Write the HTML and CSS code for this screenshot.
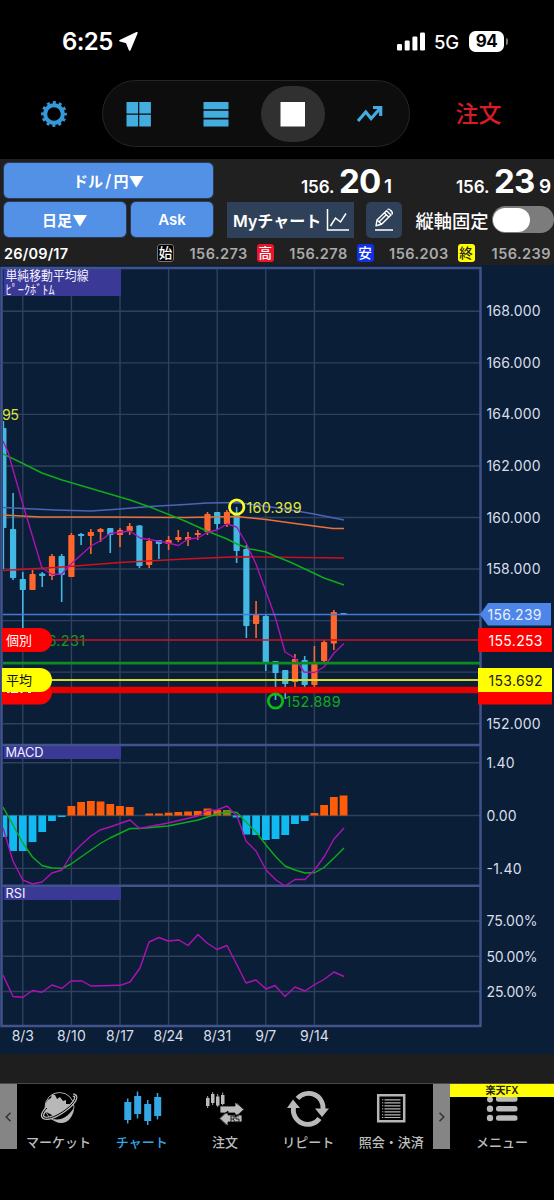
FILE: index.html
```html
<!DOCTYPE html>
<html lang="ja">
<head>
<meta charset="utf-8">
<title>チャート</title>
<link rel="stylesheet" href="styles.css">
</head>
<body>
<header class="status">
  <span class="clock">6:25</span>
  <svg class="loc" width="21" height="21" viewBox="0 0 21 21"><path d="M18.800 1.800 2 9.700l6.700 1.700 3 7.500z" fill="#fff" stroke="#fff" stroke-width="1.800" stroke-linejoin="round"/></svg>
  <svg class="signal" width="29" height="19" viewBox="0 0 29 19" fill="#fff"><rect x="0" y="12" width="5" height="6.5" rx="1.3"/><rect x="7.7" y="8.5" width="5" height="10" rx="1.3"/><rect x="15.4" y="4.5" width="5" height="14" rx="1.3"/><rect x="23" y=".5" width="5" height="18" rx="1.3"/></svg>
  <span class="net">5G</span>
  <span class="battery">94</span><i class="tip"></i>
</header>

<nav class="modes">
  <svg class="gear" width="28" height="28" viewBox="-14 -14 28 28"><circle r="8.800" fill="none" stroke="#3598d8" stroke-width="4"/><circle r="11.500" fill="none" stroke="#3598d8" stroke-width="2.800" stroke-dasharray="3 3.020" stroke-dashoffset="1.500"/></svg>
  <div class="pill">
    <div class="mode"><svg width="26" height="26" fill="#43addf"><path d="M.5 1h11.600v11.500H.5zM13.300 1h11.600v11.500H13.300zM.5 13.800h11.600v11.700H.5zM13.300 13.800h11.600v11.700H13.300z"/></svg></div>
    <div class="mode"><svg width="26" height="26" fill="#43addf"><path d="M.5 1h25v7.200h-25zM.5 9.800h25v7h-25zM.5 18.400h25v7.100h-25z"/></svg></div>
    <div class="mode on"><svg width="26" height="26" fill="#fff"><path d="M.5 1h24.500v24.500H.5z"/></svg></div>
    <div class="mode"><svg width="28" height="20" fill="none" stroke="#43addf" stroke-width="3.200"><path d="m2 17 7.800-9 5.300 6.500L24 4.500"/><path d="M17 3.500h7.700V12"/></svg></div>
  </div>
  <span class="order">注文</span>
</nav>

<section class="panel">
  <div class="row pair">
    <div class="btn wide">ドル<span class="slash">/</span>円▼</div>
    <div class="rate bid"><small>156.</small><b>20</b><em>1</em></div>
    <div class="rate ask"><small>156.</small><b>23</b><em>9</em></div>
  </div>
  <div class="row tools">
    <div class="btn term">日足▼</div>
    <div class="btn side">Ask</div>
    <div class="my"><span>Myチャート</span><svg width="24" height="24" fill="none" stroke="#fff" stroke-width="1.500"><path d="M1.500 1v21H23M4.500 18l5-8 5 4 5.500-8.500"/></svg></div>
    <div class="pen"><svg width="22" height="25" fill="none" stroke="#fff" stroke-width="1.400" stroke-linejoin="round"><path d="M2 23h18M3 18.800l1-5.800L13.500 3.800l4.500 4.200-9.500 9.300zM4 13l4.500 4.300M11.500 6l4.500 4.200M14.500 2.500c1.500-1.300 6 2.700 4.500 4.800M6 15l7.500-7.500"/></svg></div>
    <span class="axis">縦軸固定</span>
    <div class="toggle"><i></i></div>
  </div>
  <div class="row ohlc">
    <span class="date">26/09/17</span>
    <i class="tag open">始</i><span class="val">156.273</span>
    <i class="tag high">高</i><span class="val">156.278</span>
    <i class="tag low">安</i><span class="val">156.203</span>
    <i class="tag close">終</i><span class="val">156.239</span>
  </div>
</section>

<svg class="chart" width="554" height="789" viewBox="0 265 554 789">
  <defs><clipPath id="plot"><rect x="3" y="268" width="478" height="760"/></clipPath></defs>
  <rect y="265" width="554" height="789" fill="#0b1e38"/>
  <g id="grid" stroke="#2e415d" stroke-width="1.400"></g>
  <g id="labels">
    <path d="M3 268h118v28H3zM3 745h118v14H3zM3 886h118v14H3z" fill="#3a3996"/>
    <path d="M3 269v26M3 746v13M3 887v13" stroke="#1d1f88" stroke-width="2"/>
  </g>
  <path d="M1.500 268H480.500V1026H1.500ZM1.500 745H480.500M1.500 885.800H480.500" fill="none" stroke="#40538a" stroke-width="2.500"/>
  <g class="name">
    <text x="5.500" y="279.500" textLength="83" lengthAdjust="spacingAndGlyphs">単純移動平均線</text>
    <text x="5.500" y="293.500" textLength="49" lengthAdjust="spacingAndGlyphs">ﾋﾟｰｸﾎﾞﾄﾑ</text>
    <text x="5.500" y="757" textLength="38">MACD</text>
    <text x="5.500" y="898" textLength="20">RSI</text>
  </g>
  <g id="scale" class="scale"></g>
  <g clip-path="url(#plot)">
    <g id="candles"></g>
    <g id="bars"></g>
    <g id="curves" fill="none" stroke-width="1.400" stroke-linejoin="round"></g>
    <text class="peak" x="2" y="420" textLength="17" fill="#d7e23a">95</text>
    <text class="peak" x="32" y="646" textLength="53" fill="#1b9a20">156.231</text>
    <path d="M3 614.500h478" stroke="#4679d3" stroke-width="1.500"/>
    <path d="M3 640h478" stroke="#d01020" stroke-width="1.500"/>
    <path d="M3 663.200h477" stroke="#0d8c22" stroke-width="2.700"/>
    <path d="M3 680h478" stroke="#d8da30" stroke-width="1.900"/>
    <path d="M3 690h478" stroke="#e60000" stroke-width="6.500"/>
    <circle cx="236.700" cy="507" r="7.200" fill="none" stroke="#ffff20" stroke-width="2.700"/>
    <circle cx="275.500" cy="701" r="7.200" fill="none" stroke="#0bbd16" stroke-width="2.700"/>
    <text class="peak" x="246.500" y="512.500" textLength="55" fill="#e2e83c">160.399</text>
    <text class="peak" x="285.500" y="706.500" textLength="55" fill="#13aa1c">152.889</text>
  </g>
  <g class="flag">
    <path d="M2 680.500h38a12 12 0 0 1 0 24H2zM2 628h38a12 12 0 0 1 0 24H2z" fill="#f00"/>
    <path d="M7 692.500h2.500M11 692.500h7M20.500 692.500h2M28 692.500h3" stroke="#fff" stroke-width="1"/>
    <text x="6" y="645" textLength="26" fill="#fff">個別</text>
    <path d="M2 668h38a12 12 0 0 1 0 24H2z" fill="#ff0"/>
    <text x="6" y="685" textLength="26" fill="#111">平均</text>
  </g>
  <path d="m480 614.500 8-11.500h63v22.500h-63z" fill="#4d86e8"/>
  <path d="M478 628h74v24h-74zM478 680.500h74v24h-74z" fill="#f00"/>
  <g class="quote">
    <path d="M478 668h74v24h-74z" fill="#ff0"/>
    <text x="487.500" y="620" textLength="54" fill="#e7f0ff">156.239</text>
    <text x="488.500" y="645.500" textLength="54" fill="#fff">155.253</text>
    <text x="488.500" y="685.500" textLength="54" fill="#222">153.692</text>
  </g>
</svg>

<div class="band"></div>

<nav class="tabs">
  <div class="arrow"><svg width="7" height="10" fill="none" stroke="#333" stroke-width="1.500"><path d="M5.500.8 1.200 5l4.300 4.200"/></svg></div>
  <div class="tab">
    <svg width="40" height="40" viewBox="38 1088 40 40"><circle cx="58.500" cy="1107" r="14.500" fill="none" stroke="#aaa" stroke-width="1"/><path d="M45 1112c-2-7 0-12 5-14l1-4 3 1 2 4 3-2 3 4 3-1v4l4 0-6 7-10 5z" fill="#b8b8b8"/><path d="M52 1119c9 2 15-3 20-10 1 6-4 14-12 14-4 0-7-2-8-4" fill="#b8b8b8"/><path d="M46 1108c-10 10-2 14 12 6 14-8 21-18 14-19" fill="none" stroke="#bbb" stroke-width="3.400"/><path d="M46 1108c-10 10-2 14 12 6 14-8 21-18 14-19" fill="none" stroke="#000" stroke-width="1"/></svg>
    <span>マーケット</span>
  </div>
  <div class="tab on">
    <svg width="40" height="40" viewBox="121 1088 40 40" fill="#35a7e5" stroke="#35a7e5"><path d="M126.700 1098.500v25M136.500 1091.500v27M146.700 1100v25M156.500 1093v26.500" stroke-width="1.500"/><path d="M123.300 1102h7v18h-7zM133.200 1096h7v18h-7zM143.200 1104h7v17h-7zM153.200 1097h7v19h-7z" stroke="none"/></svg>
    <span>チャート</span>
  </div>
  <div class="tab">
    <svg width="44" height="40" viewBox="203 1088 44 40" fill="#bbb"><path d="M207.700 1096v12M212.700 1092v13M217.700 1094v13M222.700 1092.500v13" stroke="#aaa" stroke-width="1"/><path d="M206 1098h3.500v8H206zM211 1094h3.500v9H211zM216 1096.500h3.500v9H216zM221 1095h3.500v9H221z"/><path d="M220 1106h15v-4l9.500 7.500-9.500 7.500v-4h-15zM242 1115h-14v-4l-9 7.500 9 7.500v-4h14z" stroke="#000" stroke-width=".8"/><path d="m237 1103 6.500 6.500-6.500 6.500M226 1112l-6 6.500 6 6.500" fill="none" stroke="#333"/><path d="M231 1116v6m0-6h3v3h-3m2 0 2 3m4-6h-3v3h3v3h-3" fill="none" stroke="#222"/></svg>
    <span>注文</span>
  </div>
  <div class="tab">
    <svg width="44" height="40" viewBox="286 1088 44 40" fill="none" stroke="#b9b9b9" stroke-width="4.800"><path d="M297.500 1098.500a14.500 14.500 0 0 1 25.500 11M319.500 1118.500a14.500 14.500 0 0 1-26-11"/><path d="m315 1108.500 14 0-7 8.500zM287 1108l6-8.500 7 8.500z" fill="#b9b9b9" stroke="none"/></svg>
    <span>リピート</span>
  </div>
  <div class="tab">
    <svg width="40" height="40" viewBox="371 1088 40 40" fill="none" stroke="#b5b5b5"><path d="M378.200 1095.200h26v26h-26z" stroke-width="2.500"/><path d="M384.500 1099.800h16M384.500 1102.800h16M384.500 1105.800h16M384.500 1108.800h16M384.500 1111.800h16M384.500 1114.800h16M384.500 1117.500h16" stroke-width="1.200"/><path d="M382 1099.800h1.300M382 1102.800h1.300M382 1105.800h1.300M382 1108.800h1.300M382 1111.800h1.300M382 1114.800h1.300M382 1117.500h1.300"/></svg>
    <span>照会・決済</span>
  </div>
  <div class="arrow"><svg width="7" height="10" fill="none" stroke="#333" stroke-width="1.500"><path d="M1.500.8 5.800 5 1.500 9.200"/></svg></div>
  <div class="menu">
    <div class="brand">楽天FX</div>
    <svg width="34" height="28" viewBox="485 1097 34 28" fill="#b9b9b9"><circle cx="490" cy="1099.500" r="3"/><circle cx="490" cy="1108.700" r="3.200"/><circle cx="490" cy="1118" r="3.200"/><rect x="496" y="1095.500" width="21.500" height="6.200" rx="2.500"/><rect x="496" y="1106" width="21.500" height="5.500" rx="2.500"/><rect x="496" y="1115.300" width="21.500" height="5.500" rx="2.500"/></svg>
    <span>メニュー</span>
  </div>
</nav>
<script src="chart.js"></script>
</body>
</html>
```

FILE: styles.css
```css
* { box-sizing: border-box; }
body { margin: 0; width: 554px; height: 1200px; overflow: hidden; background: #000; color: #fff; font-family: Inter, "Noto Sans CJK JP", sans-serif; }
svg { display: block; flex: none; }
i, em { font-style: normal; }
.status { height: 80px; padding: 3px 46px 0 62px; display: flex; align-items: center; }
.clock { font-size: 24px; font-weight: 600; letter-spacing: -.6px; width: 56px; }
.signal { margin-left: 258px; }
.net { font-size: 18.500px; font-weight: 500; width: 35px; margin-left: 8px; white-space: nowrap; letter-spacing: -.3px; }
.battery { width: 35px; height: 21px; border-radius: 6.500px; background: #fff; color: #000; font-size: 17px; line-height: 21px; font-weight: 700; letter-spacing: -.6px; text-align: center; flex: none; }
.tip { width: 2px; height: 7px; margin-left: 1.500px; border-radius: 0 2px 2px 0; background: #777; }

.modes { height: 79px; padding-left: 39.500px; display: flex; align-items: flex-start; }
.gear { margin-top: 20px; }
.pill { width: 308px; height: 67px; margin-left: 34px; padding: 0 4.500px; border: 1px solid #252525; border-radius: 34px; background: #0d0d0d; display: flex; align-items: center; }
.mode { width: 64px; height: 56px; margin-right: 13px; display: flex; align-items: center; justify-content: center; border-radius: 28px; flex: none; }
.mode.on { background: #303030; }
.mode:last-child { margin-right: 0; }
.order { margin: 17px 0 0 46px; font-size: 23px; line-height: 34px; font-weight: 500; color: #d51c28; }

.panel { height: 106px; background: #202020; padding: 4px 0 0 4px; }
.row { display: flex; align-items: center; }
.btn { height: 35px; border-radius: 5px; background: #5391e6; box-shadow: 0 0 0 1px #293c59; display: flex; align-items: center; justify-content: center; font-size: 15px; font-weight: 600; flex: none; }
.wide { width: 209px; }
.slash { margin: 0 2px; font-size: 17px; font-weight: 500; }
.pair { height: 35px; }
.rate { display: flex; align-items: baseline; font-weight: 600; line-height: 36px; padding-top: 7px; flex: none; }
.rate small { font-size: 17px; width: 38px; letter-spacing: -.1px; }
.rate b { font-size: 33px; font-weight: 700; width: 45px; letter-spacing: -.8px; }
.rate em { font-size: 19px; width: 12px; }
.bid { margin-left: 88px; }
.ask { margin-left: 60px; }
.tools { margin-top: 3.500px; height: 36px; }
.term { width: 121.500px; }
.side { width: 82px; margin-left: 5.500px; }
.my { width: 127px; height: 36px; margin-left: 14px; padding-left: 6px; background: #2f4059; display: flex; align-items: center; font-size: 16px; font-weight: 600; white-space: nowrap; flex: none; }
.my span { width: 93px; }
.pen { width: 36px; height: 36px; margin-left: 12px; border-radius: 5px; background: #2f4059; display: flex; align-items: center; justify-content: center; flex: none; }
.axis { width: 76px; margin-left: 13.500px; font-size: 18.300px; font-weight: 500; white-space: nowrap; flex: none; }
.toggle { width: 62px; height: 27px; border-radius: 14px; background: #7c7c7c; padding: 1.500px; flex: none; }
.toggle i { display: block; width: 37px; height: 24px; border-radius: 12px; background: #fff; }
.ohlc { height: 30px; padding-top: 1px; font-size: 14.500px; font-weight: 600; }
.date { width: 153px; letter-spacing: .2px; flex: none; }
.tag { width: 17px; height: 18px; border-radius: 3px; font-size: 13.500px; font-weight: 500; line-height: 18px; text-align: center; flex: none; }
.open { background: #000; outline: 1px solid #777; outline-offset: -1px; }
.high { background: #e9152c; }
.low { background: #1030e8; }
.close { background: #ff0; color: #222; }
.val { width: 82.800px; padding-left: 15.500px; color: #aaa; letter-spacing: .45px; flex: none; }
.low + .val { width: 84px; }
.close + .val { padding-left: 17px; }

.chart text { font-family: Inter, "Noto Sans CJK JP", sans-serif; }
.name text { font-size: 12.800px; fill: #f0f0ff; }
.scale text { font-size: 14px; fill: #d8deea; }
.peak { font-size: 14.300px; }
.flag text { font-size: 13px; }
.quote text { font-size: 14px; }

.band { height: 29px; background: #1e1e1e; }
.tabs { height: 117px; border-top: 1px solid #484848; display: flex; align-items: flex-start; }
.arrow { width: 17px; height: 65px; background: #858585; display: flex; align-items: center; justify-content: center; flex: none; }
.tab { width: 83.200px; padding-top: 4px; display: flex; flex-direction: column; align-items: center; color: #bdbdbd; }
.tab span, .menu span { font-size: 13px; line-height: 20px; font-weight: 500; white-space: nowrap; margin-top: 4px; }
.tab.on { color: #35a7e5; }
.menu { width: 104px; display: flex; flex-direction: column; align-items: center; color: #bdbdbd; }
.brand { width: 104px; height: 13px; background: #ff0; color: #222; font-size: 10px; line-height: 13px; font-weight: 600; text-align: center; }
.menu span { margin-top: 7px; }
```

FILE: chart.js
```js
const NS = 'http://www.w3.org/2000/svg';
const step = 9.72, first = 3.36;
const px = i => first + i * step;
const add = (id, tag, attrs, text) => {
  const el = document.createElementNS(NS, tag);
  for (const k in attrs) el.setAttribute(k, attrs[k]);
  if (text) el.textContent = text;
  document.getElementById(id).appendChild(el);
};

// Grid and axis labels; rows covered by price tags carry no label
for (let i = 0; i < 9; i++) {
  const y = 311.3 + i * 51.55;
  add('grid', 'path', { d: `M3 ${y}H480` });
  if (i !== 6 && i !== 7) add('scale', 'text', { x: 486.5, y: y + 5, textLength: 54 }, (168 - i * 2) + '.000');
}
[[762.7, '1.40', 28], [815.5, '0.00', 30], [868.4, '-1.40', 35], [921, '75.00%', 51], [956.3, '50.00%', 51], [991.5, '25.00%', 51]].forEach(([y, t, w]) => {
  add('grid', 'path', { d: `M3 ${y}H480` });
  add('scale', 'text', { x: 486.5, y: y + 5.3, textLength: w }, t);
});
[['8/3', 22], ['8/10', 29], ['8/17', 28], ['8/24', 30], ['8/31', 28], ['9/7', 21], ['9/14', 29]].forEach(([t, w], i) => {
  const x = 22.8 + i * 48.6;
  add('grid', 'path', { d: `M${x} 268V1026` });
  add('scale', 'text', { x: x - w / 2, y: 1040.5, textLength: w }, t);
});

// Candles: colour, wick top, wick bottom, body top, body bottom
const candles = [
  'b 421 569 428 528', 'b 493 580 529 578', 'b 572 640 579 590', 'o 570 590 574 590', 'b 572 587 573.5 576',
  'o 554 580 556 576', 'b 554 602 556 575', 'o 533 577 535 577', 'b 533 545 534 536', 'o 529 554 532 536',
  'o 528 542 529 532', 'b 528 553 528 535', 'o 528 547 530 535', 'o 523 535 526 531', 'b 525 568 525.5 566',
  'o 538 568 541 565', 'b 540 559 540 544', 'o 536 550 540 544', 'o 530 542 537 540', 'o 532 546 537 540',
  'o 530 540 533 535', 'o 512 535 514 532', 'b 512 530 512 524', 'o 510 527 512 524', 'b 507 563 514 551',
  'b 545 638 549 626', 'o 601 638 615 624', 'b 614 671 616 663', 'b 661 700 661 673', 'b 670 699 670 684',
  'o 654 690 659 682', 'b 656 689 660 685', 'o 646 687 662 685', 'o 640 664 642 661', 'o 610 650 612 643.5',
  'b 613 615 613 614.5'
];
candles.forEach((c, i) => {
  const [k, a, b, t, m] = c.split(' ');
  const fill = k === 'b' ? '#42b8e2' : '#ff662e', x = px(i);
  add('candles', 'rect', { x: x - .8, y: a, width: 1.6, height: b - a, fill });
  add('candles', 'rect', { x: x - 3.1, y: t, width: 6.2, height: m - t, rx: .7, fill });
});

// MACD histogram
[837, 851, 851, 842, 832, 821, 817, 806, 802, 801, 801.5, 804, 806, 807, 815.5, 813.5, 813.5, 812.7, 812, 811.5, 811,
 808.5, 810, 810, 817.5, 834.5, 835, 840, 839, 835, 824, 821, 813, 805, 797, 795.5].forEach((v, i) => {
  const fill = i === 23 ? '#a8761a' : v > 815.5 ? '#10b9ef' : '#ff5c08';
  add('bars', 'rect', { x: px(i) - 3.9, y: Math.min(v, 815.5), width: 7.8, height: Math.abs(v - 815.5), fill });
});

// Moving averages, MACD lines and RSI
[
  ['#4d63b4', '3,507.5 55,510 91,511 120,509 150,506.5 185,504.5 207,503 236,502.5 256,505 285,509 314,514 344,520'],
  ['#e87339', '3,515 40,517 100,517 185,517.5 237,516.5 266,519.5 295,523.5 333,528.5 344,528.5'],
  ['#ce1020', '3,570.5 62,567 120,562.5 185,559 237,556.7 344,558'],
  ['#0dad18', '3,454 22,463 42,473 62,480 91,488.5 130,500 150,507 185,521 207,531 227,539 237,544 250,549 256,550 266,552 275,556 290,562 305,569 324,578 344,585'],
  ['#ae12b5', '3,441 8,452 22.8,504 42,568 52,574.5 61.7,574 71,564 91,546 100,541 110,533.5 130,531 140,538 155,540.5 168,543 178.5,545.5 188,539 198,538 207,532.5 217,530 227,524 236.7,527 246,543 256,564 275.5,618 285,652 295,658 304,672 314.5,672.5 324,667 334,653 344,643.5'],
  ['#0dad18', '3,807 13,825 22.8,843 32.5,857 42,865.5 52,868 62,868.5 71,864 81,857 91,850 101,843 110,838 130,828.5 140,828.5 168,826 198,820 217,814 227,812 237,812.5 246,822 256,832 266,845 276,857 285,866 295,870 305,873 315,872.5 324,867.5 334,858 344,848'],
  ['#ae12b5', '3,828 13,861 22.8,880 32.5,884 42,882 52,873 62,870 71,855 81,845 91,836 100,830 110,827 130,820 139.5,828.5 168,823 198,816 207,810.5 217,810 227,806 237,816 246,841 256,851 266,870 276,880 285,886 295,879.5 305,879.5 314.5,870 324,857 334,839 344,828'],
  ['#ae12b5', '3,975 13,996.5 23,997.3 32.5,990.5 42,992.3 52,985 62,988.3 71,981 82,981 91,986 120,985.3 130,982 140,968 149,942 159,937.5 168,941 179,940 188,945.5 198,934.5 207,943 217,949.5 227,945.5 237,965 246,983 256,980 266,989 275,985.5 285,996.5 295,987 305,991 314,985 324,979.5 334,972 344,976.5']
].forEach(([stroke, points]) => add('curves', 'polyline', { stroke, points }));
```
